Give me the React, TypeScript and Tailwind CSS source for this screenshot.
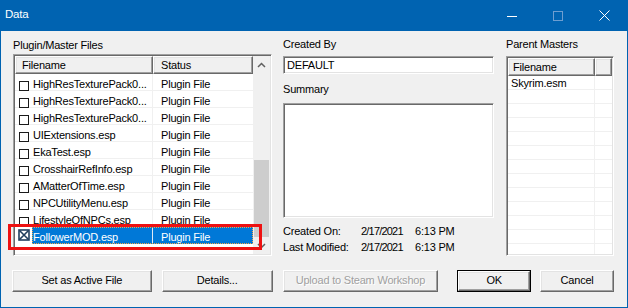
const pluginRows = [
  "HighResTexturePack0...",
  "HighResTexturePack0...",
  "HighResTexturePack0...",
  "UIExtensions.esp",
  "EkaTest.esp",
  "CrosshairRefInfo.esp",
  "AMatterOfTime.esp",
  "NPCUtilityMenu.esp",
  "LifestyleOfNPCs.esp",
];

const sunken =
  "border border-t-[#a0a0a0] border-l-[#a0a0a0] border-r-white border-b-white p-px shadow-[inset_1px_1px_0_#696969,inset_-1px_-1px_0_#e3e3e3]";

const raised =
  "border border-t-white border-l-white border-r-[#696969] border-b-[#696969] shadow-[inset_-1px_-1px_0_#a0a0a0,inset_1px_1px_0_#e3e3e3]";

function TitleBar() {
  return (
    <div className="flex h-[31px] items-center pr-px text-white">
      <span className="pl-[5px] pb-px font-['Segoe_UI','Liberation_Sans',sans-serif] text-[11.5px]">
        Data
      </span>
      <div className="ml-auto flex h-full">
        <div className="flex w-[46px] items-center justify-center">
          <svg width="10" height="10" viewBox="0 0 10 10">
            <line x1="0" y1="5.5" x2="10" y2="5.5" stroke="white" strokeWidth="1" />
          </svg>
        </div>
        <div className="flex w-[46px] items-center justify-center">
          <svg width="10" height="10" viewBox="0 0 10 10">
            <rect x="0.5" y="0.5" width="9" height="9" fill="none" stroke="#6e9ed0" strokeWidth="1" />
          </svg>
        </div>
        <div className="flex w-[46px] items-center justify-center">
          <svg width="11" height="11" viewBox="0 0 11 11">
            <path d="M0.5 0.5 L10.5 10.5 M10.5 0.5 L0.5 10.5" stroke="white" strokeWidth="1" />
          </svg>
        </div>
      </div>
    </div>
  );
}

function Chevron({ up }: { up: boolean }) {
  return (
    <svg width="9" height="6" viewBox="0 0 9 6">
      <polyline
        points={up ? "1,5 4.5,1.5 8,5" : "1,1 4.5,4.5 8,1"}
        fill="none"
        stroke="#606060"
        strokeWidth="1.5"
      />
    </svg>
  );
}

function PluginList() {
  return (
    <div className={`mt-[2px] flex h-[202px] w-[259px] ${sunken}`}>
      <div className="flex w-[238px] flex-col overflow-hidden bg-white">
        <div className="flex h-[18px] shrink-0">
          <div className={`h-full w-[138px] bg-[#f0f0f0] pl-[6px] leading-[16px] ${raised}`}>Filename</div>
          <div className={`h-full w-[100px] bg-[#f0f0f0] pl-[7px] leading-[16px] ${raised}`}>Status</div>
        </div>
        {pluginRows.map((name, i) => (
          <div key={i} className="flex h-[17px] shrink-0 border-b border-[#f0f0f0]">
            <div className="flex w-[138px] border-r border-[#f0f0f0] pl-[4px]">
              <div className="mt-[7px] h-[10px] w-[10px] border border-[#1a1a1a]" />
              <span className="ml-[4px] pt-[3px] leading-[14px] whitespace-nowrap">{name}</span>
            </div>
            <span className="pl-[8px] pt-[3px] leading-[14px]">Plugin File</span>
          </div>
        ))}
        <div className="flex h-[17px] shrink-0">
          <div className="w-[17px] pl-[3px] pt-[2px]">
            <svg width="12" height="12" viewBox="0 0 12 12">
              <rect x="1" y="1" width="10" height="10" fill="none" stroke="#203e5e" strokeWidth="1.6" />
              <path d="M1.5 1.5 L10.5 10.5 M10.5 1.5 L1.5 10.5" stroke="#203e5e" strokeWidth="1.6" />
            </svg>
          </div>
          <div className="flex flex-1 bg-[#0078d7] text-white outline-1 outline-offset-[-1px] outline-dotted outline-[#f2a54a]">
            <span className="w-[121px] border-r border-[#dfe9f5] pl-px pt-[3px] leading-[14px]">FollowerMOD.esp</span>
            <span className="pl-[8px] pt-[3px] leading-[14px]">Plugin File</span>
          </div>
        </div>
      </div>
      <div className="flex w-[17px] flex-col bg-[#f0f0f0]">
        <div className="flex h-[17px] items-center justify-center">
          <Chevron up />
        </div>
        <div className="flex flex-1 flex-col justify-end">
          <div className="mx-auto h-[77px] w-[15px] bg-[#cdcdcd]" />
        </div>
        <div className="flex h-[17px] items-center justify-center">
          <Chevron up={false} />
        </div>
      </div>
    </div>
  );
}

function MastersList() {
  return (
    <div className={`mt-[6px] flex h-[200px] w-[108px] ${sunken}`}>
      <div className="flex w-full flex-col overflow-hidden bg-white">
        <div className="flex h-[18px] shrink-0">
          <div className={`h-full w-[87px] bg-[#f0f0f0] pl-[4px] leading-[16px] ${raised}`}>Filename</div>
          <div className={`h-full flex-1 bg-[#f0f0f0] ${raised}`} />
        </div>
        {Array.from({ length: 13 }).map((_, i) => (
          <div key={i} className="flex h-[14px] shrink-0 border-b border-[#f0f0f0]">
            <div className="w-[87px] border-r border-[#f0f0f0] pl-[3px] pt-px leading-[13px]">
              {i === 0 ? "Skyrim.esm" : ""}
            </div>
          </div>
        ))}
      </div>
    </div>
  );
}

function Button({
  label,
  width,
  disabled,
  primary,
  className,
}: {
  label: string;
  width: string;
  disabled?: boolean;
  primary?: boolean;
  className?: string;
}) {
  return (
    <div className={`h-[22px] ${width} ${primary ? "border border-black" : ""} ${className ?? ""}`}>
      <div
        className={`flex h-full w-full items-center justify-center bg-[#f0f0f0] pb-[2px] ${raised} ${
          disabled ? "text-[#a0a0a0] text-shadow-[1px_1px_0_#ffffff]" : ""
        }`}
      >
        {label}
      </div>
    </div>
  );
}

function DateLine({ label }: { label: string }) {
  return (
    <div className="flex leading-[16px]">
      <span className="w-[78px]">{label}</span>
      <span className="w-[54px] tracking-[-0.8px]">2/17/2021</span>
      <span>6:13 PM</span>
    </div>
  );
}

export default function App() {
  return (
    <div className="relative flex h-[308px] w-[628px] flex-col bg-[#0063b1] font-['Liberation_Sans',Arial,sans-serif] text-[11px] tracking-[-0.2px] text-black">
      <TitleBar />
      <div className="mx-px mb-px flex flex-1 flex-col bg-[#f0f0f0] pl-[12px] pr-[13px] pt-[8px]">
        <div className="flex items-start">
          <div className="flex w-[259px] flex-col">
            <div className="h-[13px] leading-[13px]">Plugin/Master Files</div>
            <PluginList />
          </div>

          <div className="ml-[11px] flex w-[211px] flex-col">
            <div className="h-[11px] leading-[11px]">Created By</div>
            <div className={`mt-[6px] h-[18px] bg-white ${sunken}`}>
              <div className="h-full bg-white pl-[2px] leading-[14px]">DEFAULT</div>
            </div>
            <div className="mt-[9px] h-[13px] leading-[13px]">Summary</div>
            <div className={`mt-[7px] h-[115px] bg-white ${sunken}`} />
            <div className="mt-[5px]">
              <DateLine label="Created On:" />
              <DateLine label="Last Modified:" />
            </div>
          </div>

          <div className="ml-[12px] flex w-[108px] flex-col">
            <div className="h-[11px] leading-[11px]">Parent Masters</div>
            <MastersList />
          </div>
        </div>

        <div className="ml-[-1px] mt-[14px] flex">
          <Button label="Set as Active File" width="w-[140px]" />
          <Button label="Details..." width="w-[111px]" className="ml-[10px]" />
          <Button label="Upload to Steam Workshop" width="w-[156px]" className="ml-[10px]" disabled />
          <Button label="OK" width="w-[74px]" className="ml-[19px]" primary />
          <Button label="Cancel" width="w-[74px]" className="ml-[9px]" />
        </div>
      </div>

      <div className="absolute left-[8px] top-[224px] h-[26px] w-[254px] border-[3px] border-[#ee1111]" />
    </div>
  );
}
